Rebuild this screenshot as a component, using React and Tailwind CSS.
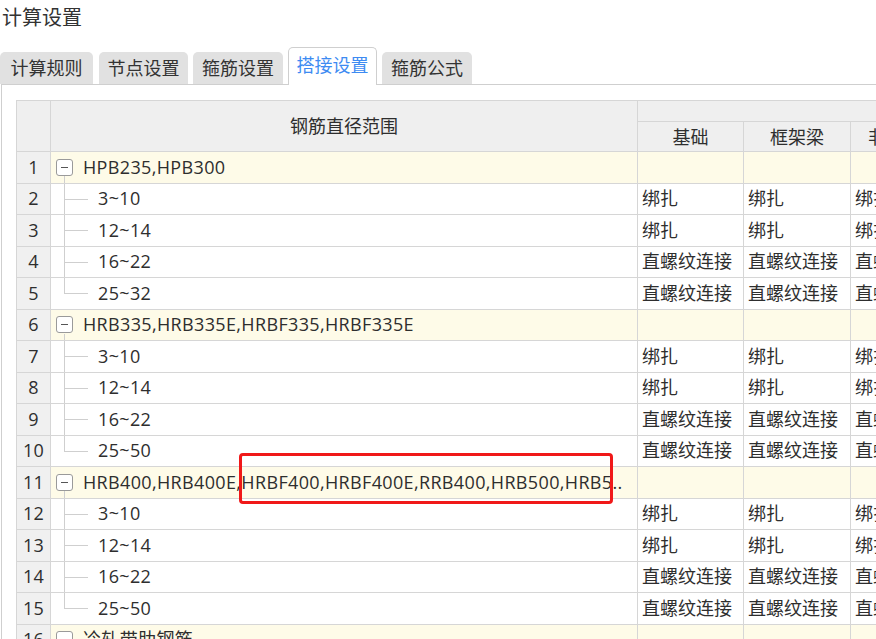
import React from "react";

const LINE = "border-[#d6d6d6]";

const groups = [
  {
    name: "HPB235,HPB300",
    children: ["3~10", "12~14", "16~22", "25~32"],
  },
  {
    name: "HRB335,HRB335E,HRBF335,HRBF335E",
    children: ["3~10", "12~14", "16~22", "25~50"],
  },
  {
    name: "HRB400,HRB400E,HRBF400,HRBF400E,RRB400,HRB500,HRB5..",
    children: ["3~10", "12~14", "16~22", "25~50"],
  },
  {
    name: "冷轧带肋钢筋",
    children: [],
  },
];

const methods = ["绑扎", "绑扎", "直螺纹连接", "直螺纹连接"];

function Tab({ label, active, w, ml }) {
  if (active) {
    return (
      <div
        className={`${w} ${ml} h-[38px] -mb-[1px] bg-white border border-b-0 border-[#cfcfcf] rounded-t-[5px] flex items-center justify-center text-[18px] text-[#3d8bf2] relative z-10`}
      >
        <span className="-mt-[2px]">{label}</span>
      </div>
    );
  }
  return (
    <div
      className={`${w} ${ml} h-[32px] bg-[#e1e1e1] rounded-t-[5px] flex items-center justify-center text-[18px] text-[#333]`}
    >
      {label}
    </div>
  );
}

function Row({ n, group, label, last, data }) {
  const bg = group ? "bg-[#fefbe8]" : "bg-white";
  return (
    <div className={`flex h-[31.5px] shrink-0 border-b ${LINE}`}>
      <div
        className={`w-[34px] shrink-0 border-r ${LINE} bg-[#f0f0f0] flex items-center justify-center text-[18px] text-[#2e2e2e] tracking-[0.3px]`}
      >
        {n}
      </div>
      <div
        className={`w-[587px] shrink-0 border-r ${LINE} ${bg} flex items-center relative whitespace-nowrap overflow-hidden text-[18px] text-[#2e2e2e] tracking-[0.35px]`}
      >
        {group ? (
          <>
            <div className="absolute left-[13px] top-[24px] bottom-0 w-px bg-[#cfcfcf]" />
            <div className="ml-[5px] w-[17px] h-[17px] shrink-0 border border-[#9a9a9a] rounded-[3px] bg-white flex items-center justify-center">
              <div className="w-[7px] h-px bg-[#555]" />
            </div>
            <span className="ml-[10px]">{label}</span>
          </>
        ) : (
          <>
            <div
              className={`absolute left-[13px] top-0 w-px bg-[#cfcfcf] ${
                last ? "h-1/2" : "h-full"
              }`}
            />
            <div className="absolute left-[13px] top-1/2 w-[24px] h-px bg-[#cfcfcf]" />
            <span className="ml-[47px]">{label}</span>
          </>
        )}
      </div>
      {[106, 107, 107].map((w, i) => (
        <div
          key={i}
          className={`${
            i === 0 ? "w-[106px]" : "w-[107px]"
          } shrink-0 border-r ${LINE} ${bg} flex items-center pl-[4px] whitespace-nowrap overflow-hidden text-[18px] text-[#2e2e2e]`}
        >
          {data}
        </div>
      ))}
    </div>
  );
}

export default function App() {
  const rows = [];
  let n = 1;
  groups.forEach((g) => {
    rows.push(<Row key={n} n={n} group label={g.name} />);
    n++;
    g.children.forEach((c, i) => {
      rows.push(
        <Row
          key={n}
          n={n}
          label={c}
          last={i === g.children.length - 1}
          data={methods[i]}
        />
      );
      n++;
    });
  });

  return (
    <div
      className="w-[876px] h-[639px] overflow-hidden bg-white relative flex flex-col"
      style={{ fontFamily: '"Open Sans", "Noto Sans CJK SC", sans-serif' }}
    >
      <div className="h-[47px] shrink-0 pl-[2px] pt-[4px] text-[20px] leading-[28px] text-[#333]">
        计算设置
      </div>
      <div className="flex items-end h-[37px] shrink-0 pl-0">
        <Tab label="计算规则" w="w-[93px]" ml="ml-0" />
        <Tab label="节点设置" w="w-[89px]" ml="ml-[6px]" />
        <Tab label="箍筋设置" w="w-[90px]" ml="ml-[5px]" />
        <Tab label="搭接设置" w="w-[89px]" ml="ml-[5px]" active />
        <Tab label="箍筋公式" w="w-[90px]" ml="ml-[5px]" />
      </div>
      <div className="flex-1 ml-[1px] border-l border-t border-[#cfcfcf] pl-[14px] pt-[15px] overflow-hidden">
        <div className={`border-l border-t ${LINE} flex flex-col w-[960px]`}>
          <div className={`flex h-[51px] shrink-0 border-b ${LINE} bg-[#efefef]`}>
            <div className={`w-[34px] shrink-0 border-r ${LINE}`} />
            <div
              className={`w-[587px] shrink-0 border-r ${LINE} flex items-center justify-center text-[18px] text-[#2e2e2e]`}
            >
              钢筋直径范围
            </div>
            <div className="flex flex-col flex-1">
              <div className={`h-[25px] border-b ${LINE}`} />
              <div className="flex flex-1">
                {[
                  ["w-[106px]", "基础"],
                  ["w-[107px]", "框架梁"],
                  ["w-[107px]", "非框架梁"],
                ].map(([w, t]) => (
                  <div
                    key={t}
                    className={`${w} shrink-0 border-r ${LINE} flex items-center justify-center pt-[2px] text-[18px] text-[#2e2e2e] whitespace-nowrap overflow-hidden`}
                  >
                    {t}
                  </div>
                ))}
              </div>
            </div>
          </div>
          {rows}
        </div>
      </div>
      <div className="absolute left-[239px] top-[453px] w-[374px] h-[51px] border-[3px] border-[#f01818] rounded-[4px]" />
    </div>
  );
}
